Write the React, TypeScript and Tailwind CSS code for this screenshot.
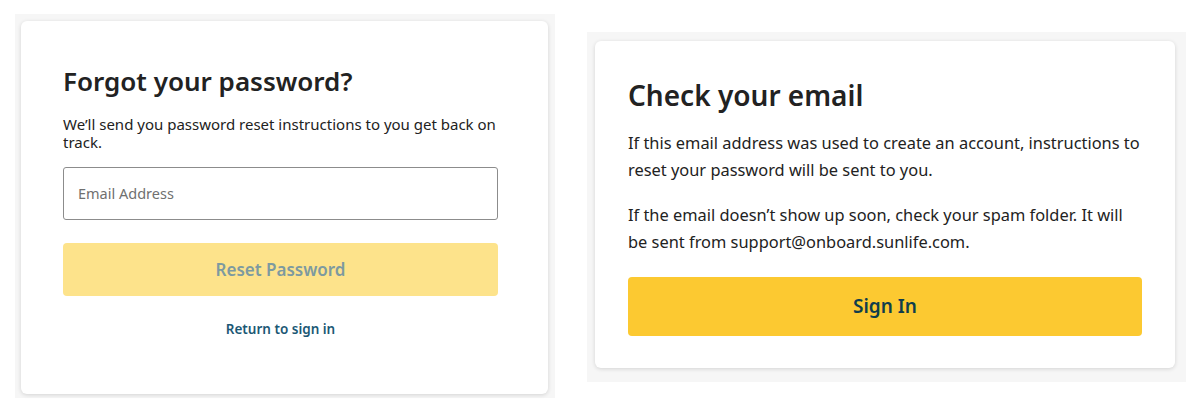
export default function App() {
  return (
    <div
      className="flex items-start bg-white w-[1201px] h-[416px]"
      style={{ fontFamily: "'Noto Sans', Lato, sans-serif" }}
    >
      {/* forgot password */}
      <div className="ml-[15px] mt-[14px] w-[540px] h-[384px] bg-[#f6f6f6] pl-[6px] pt-[7px] pr-[7px] pb-[4px]">
        <div className="h-full bg-white rounded-[6px] shadow-[0_1px_4px_rgba(0,0,0,0.14)] pl-[42px] pr-[50px] pt-[43px]">
          <h1 className="text-[26px] leading-[34px] font-semibold text-[#222]">Forgot your password?</h1>
          <p className="mt-[17px] text-[15px] leading-[18px] text-[#222]">
            We’ll send you password reset instructions to you get back on track.
          </p>
          <div className="mt-[16px] h-[53px] border border-[#8c8c8c] rounded-[3px] flex items-center px-[14px]">
            <span className="text-[14.5px] text-[#707070]">Email Address</span>
          </div>
          <button className="mt-[23px] w-full h-[53px] rounded-[4px] bg-[#fde38b] text-[17px] font-semibold text-[#7d9aa0]">
            Reset Password
          </button>
          <div className="mt-[23px] text-center text-[13.5px] font-semibold text-[#1b5875]">Return to sign in</div>
        </div>
      </div>

      {/* check email */}
      <div className="ml-[32px] mt-[32px] w-[599px] h-[350px] bg-[#f6f6f6] pl-[8px] pt-[9px] pr-[11px] pb-[14px]">
        <div className="h-full bg-white rounded-[6px] shadow-[0_1px_4px_rgba(0,0,0,0.14)] px-[33px] pt-[36px]">
          <h1 className="text-[28px] leading-[36px] font-semibold text-[#222]">Check your email</h1>
          <p className="mt-[16px] text-[16.4px] leading-[27px] text-[#222]">
            If this email address was used to create an account, instructions to reset your password will be sent to
            you.
          </p>
          <p className="mt-[18px] text-[16.4px] leading-[27px] text-[#222]">
            If the email doesn’t show up soon, check your spam folder. It will be sent from support@onboard.sunlife.com.
          </p>
          <button className="mt-[22px] w-full h-[59px] rounded-[4px] bg-[#fcc931] text-[19px] font-semibold text-[#103d4c]">
            Sign In
          </button>
        </div>
      </div>
    </div>
  );
}
